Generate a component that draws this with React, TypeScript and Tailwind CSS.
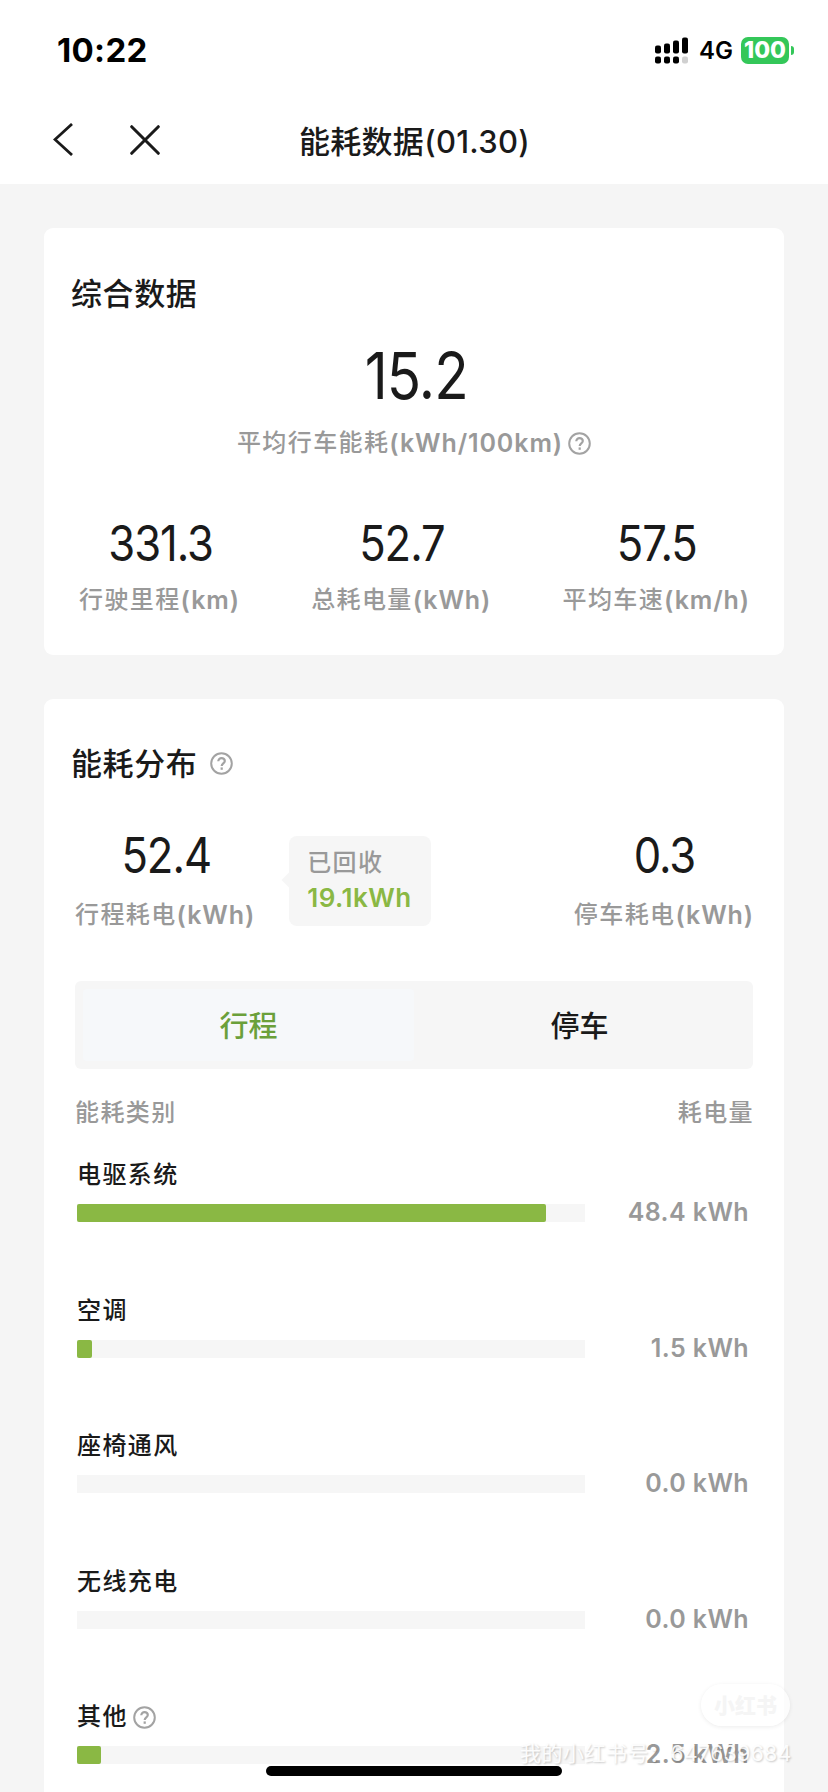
import React from 'react';

interface Stat {
    value: string;
    label: string;
    unit: string;
    tall?: boolean;
}

interface Category {
    name: string;
    amount: number;
    hasHelp?: boolean;
}

const TRIP_TOTAL = 52.4;

const summary: Stat[] = [
    { value: '331.3', label: '行驶里程', unit: 'km' },
    { value: '52.7', label: '总耗电量', unit: 'kWh' },
    { value: '57.5', label: '平均车速', unit: 'km/h' },
];

const categories: Category[] = [
    { name: '电驱系统', amount: 48.4 },
    { name: '空调', amount: 1.5 },
    { name: '座椅通风', amount: 0 },
    { name: '无线充电', amount: 0 },
    { name: '其他', amount: 2.5, hasHelp: true },
];

const HelpIcon: React.FC = () => (
    <svg className="h-[23px] w-[23px] shrink-0 text-[#a3a3a3]" viewBox="0 0 23 23" fill="none" stroke="currentColor" strokeWidth="2.2">
        <circle cx="11.5" cy="11.5" r="10.3" strokeWidth="2" />
        <path d="M8.3 9.3C8.3 7.3 9.7 6.1 11.6 6.1c1.8 0 3.2 1.2 3.2 2.9 0 2.3-3.1 2.4-3.1 4.9" />
        <path d="M11.7 15.4v2.4" />
    </svg>
);

const StatusBar: React.FC = () => (
    <div className="flex h-[100px] items-center justify-between pl-[57px] pr-[34px] text-black">
        <span className="text-[33px] leading-none font-bold tracking-[0.3px]">10:22</span>
        <div className="flex items-center">
            <svg className="h-[27px] w-[34px]" viewBox="0 0 34 27" fill="#000">
                <rect x="0" y="8.5" width="6" height="8" rx="2" />
                <rect x="9" y="6.5" width="6" height="10" rx="2" />
                <rect x="18" y="3.5" width="6" height="13" rx="2" />
                <rect x="27" y="0.5" width="6" height="16" rx="2" />
                <rect x="0" y="19.5" width="6" height="7" rx="2" />
                <rect x="9" y="19.5" width="6" height="7" rx="2" />
                <rect x="18" y="19.5" width="6" height="7" rx="2" />
                <rect x="27" y="19.5" width="6" height="7" rx="2" fill="#d0d0d0" />
            </svg>
            <span className="ml-[10px] w-[34px] pt-[2px] text-[24px] leading-none font-semibold">4G</span>
            <div className="ml-[8px] flex h-[27px] w-[48px] items-center justify-center rounded-[7px] bg-[#34c759] pt-px text-[23px] leading-none font-extrabold text-white">
                100
            </div>
            <div className="ml-[2px] h-[9px] w-[3px] rounded-r-full bg-[#34c759]" />
        </div>
    </div>
);

const NavBar: React.FC = () => (
    <div className="grid h-[84px] grid-cols-[1fr_auto_1fr] items-center">
        <div className="flex items-center pb-[5px] pl-[53px] text-[#1a1a1a]">
            <svg className="h-[33px] w-[20px]" viewBox="0 0 20 33" fill="none" stroke="currentColor" strokeWidth="2.8">
                <path d="M19 1L2 16.5 19 32" />
            </svg>
            <svg className="ml-[57px] h-[30px] w-[30px]" viewBox="0 0 30 30" fill="none" stroke="currentColor" strokeWidth="3" strokeLinecap="round">
                <path d="M1.7 1.7l26.6 26.6M28.3 1.7L1.7 28.3" />
            </svg>
        </div>
        <h1 className="pb-[2px] pl-[1px] text-[31px] leading-none font-medium tracking-[0.3px] text-[#1a1a1a]">能耗数据(01.30)</h1>
        <div />
    </div>
);

const Unit: React.FC<{ children: React.ReactNode }> = ({ children }) => (
    <span className="text-[25px] font-semibold tracking-[0.9px]">({children})</span>
);

const StatBlock: React.FC<Stat> = ({ value, label, unit, tall }) => (
    <div className="flex flex-col items-center">
        <div className="flex h-[56px] scale-x-[0.89] items-center pl-[2px] text-[49px] leading-none tracking-[-1.2px] text-[#1a1a1a]">
            {value}
        </div>
        <div className={`flex items-center text-[24px] leading-none font-medium tracking-[1.4px] whitespace-nowrap text-[#999] ${tall ? 'h-[64px]' : 'h-[58px]'}`}>
            {label}
            <Unit>{unit}</Unit>
        </div>
    </div>
);

const CategoryRow: React.FC<{ item: Category }> = ({ item }) => (
    <div className="flex h-[135.5px] flex-col">
        <div className="flex h-[55px] items-center gap-[5px] pt-[1px] text-[24px] leading-none font-medium tracking-[1.4px] text-[#1a1a1a]">
            {item.name}
            {item.hasHelp && <HelpIcon />}
        </div>
        <div className="flex h-[22px] items-center justify-between">
            <div className="h-[18px] w-[508px] bg-[#f6f6f6]">
                <div className="h-full rounded-[2px] bg-[#8ab844]" style={{ width: `${(item.amount / TRIP_TOTAL) * 100}%` }} />
            </div>
            <span className="pb-[1px] text-[25px] leading-none font-semibold tracking-[0.4px] text-[#999]">{item.amount.toFixed(1)} kWh</span>
        </div>
    </div>
);

const App: React.FC = () => {
    return (
        <div className="relative h-[1792px] w-[828px] overflow-hidden bg-[#f5f5f5] font-['Inter','Noto_Sans_CJK_SC',sans-serif]">
            <header className="h-[184px] bg-white">
                <StatusBar />
                <NavBar />
            </header>

            <main className="flex flex-col gap-[44px] px-[44px] pt-[44px]">
                <section className="h-[427px] rounded-[9px] bg-white">
                    <h2 className="flex h-[130px] items-center pl-[27px] text-[31px] leading-none font-medium tracking-[0.6px] text-[#1a1a1a]">综合数据</h2>
                    <div className="mt-[-15px] flex h-[64px] items-center justify-center pl-[5px]">
                        <span className="scale-x-[0.87] text-[65px] leading-none tracking-[-1px] text-[#1a1a1a]">15.2</span>
                    </div>
                    <div className="mt-[16px] flex h-[40px] items-center justify-center text-[24px] leading-none font-medium tracking-[1.4px] text-[#999]">
                        平均行车能耗
                        <Unit>kWh/100km</Unit>
                        <div className="ml-[5px]">
                            <HelpIcon />
                        </div>
                    </div>
                    <div className="mt-[52px] flex justify-between pr-[34px] pl-[35px]">
                        {summary.map((stat) => (
                            <StatBlock key={stat.label} {...stat} />
                        ))}
                    </div>
                </section>

                <section className="h-[1120px] rounded-[9px] bg-white">
                    <div className="flex h-[128px] items-center gap-[13px] pl-[27px]">
                        <h2 className="text-[31px] leading-none font-medium tracking-[0.6px] text-[#1a1a1a]">能耗分布</h2>
                        <HelpIcon />
                    </div>
                    <div className="flex h-[120px] items-start pr-[30px] pl-[31px]">
                        <StatBlock value="52.4" label="行程耗电" unit="kWh" tall />
                        <div className="relative mt-[9px] ml-[34px] h-[90px] w-[142px] rounded-[8px] bg-[#f6f6f6] pt-[9px] pl-[18px] font-medium">
                            <div className="absolute top-[38px] left-[-5px] h-[12px] w-[12px] rotate-45 bg-[#f6f6f6]" />
                            <div className="flex h-[36px] items-center text-[24px] leading-none tracking-[1.4px] text-[#999]">已回收</div>
                            <div className="flex h-[34px] items-center text-[26px] leading-none font-semibold tracking-[0.5px] text-[#8ab844]">19.1kWh</div>
                        </div>
                        <div className="ml-auto">
                            <StatBlock value="0.3" label="停车耗电" unit="kWh" tall />
                        </div>
                    </div>

                    <div className="mx-[31px] mt-[34px] grid h-[88px] w-[678px] grid-cols-2 rounded-[6px] bg-[#f6f6f6] p-[8px] text-[29px] leading-none font-medium">
                        <button className="rounded-[4px] bg-[#f6f8fa] pt-[2px] text-[#6ba03a]">行程</button>
                        <button className="pt-[2px] text-[#1a1a1a]">停车</button>
                    </div>

                    <div className="flex h-[78px] items-center justify-between pt-[9px] pr-[30px] pl-[31px] text-[24px] leading-none font-medium tracking-[1.4px] text-[#999]">
                        <span>能耗类别</span>
                        <span>耗电量</span>
                    </div>
                    <div className="pr-[35px] pl-[33px]">
                        {categories.map((item) => (
                            <CategoryRow key={item.name} item={item} />
                        ))}
                    </div>
                </section>
            </main>

            {/* home indicator */}
            <div className="absolute bottom-[16px] left-[266px] h-[10px] w-[296px] rounded-full bg-black" />

            {/* watermark */}
            <div className="absolute top-[1684px] left-[701px] flex h-[42px] w-[89px] items-center justify-center rounded-full bg-white/70 text-[21px] leading-none font-black text-[#f5f5f5] shadow-[0_1px_4px_rgba(0,0,0,0.08)]">
                小红书
            </div>
            <div className="absolute top-[1742px] left-[520px] flex text-[21px] leading-[24px] tracking-[0.5px] whitespace-nowrap text-white/90 [text-shadow:1px_1px_2px_rgba(0,0,0,0.22)]">
                我的小红书号：647639684
            </div>
        </div>
    );
};

export default App;
